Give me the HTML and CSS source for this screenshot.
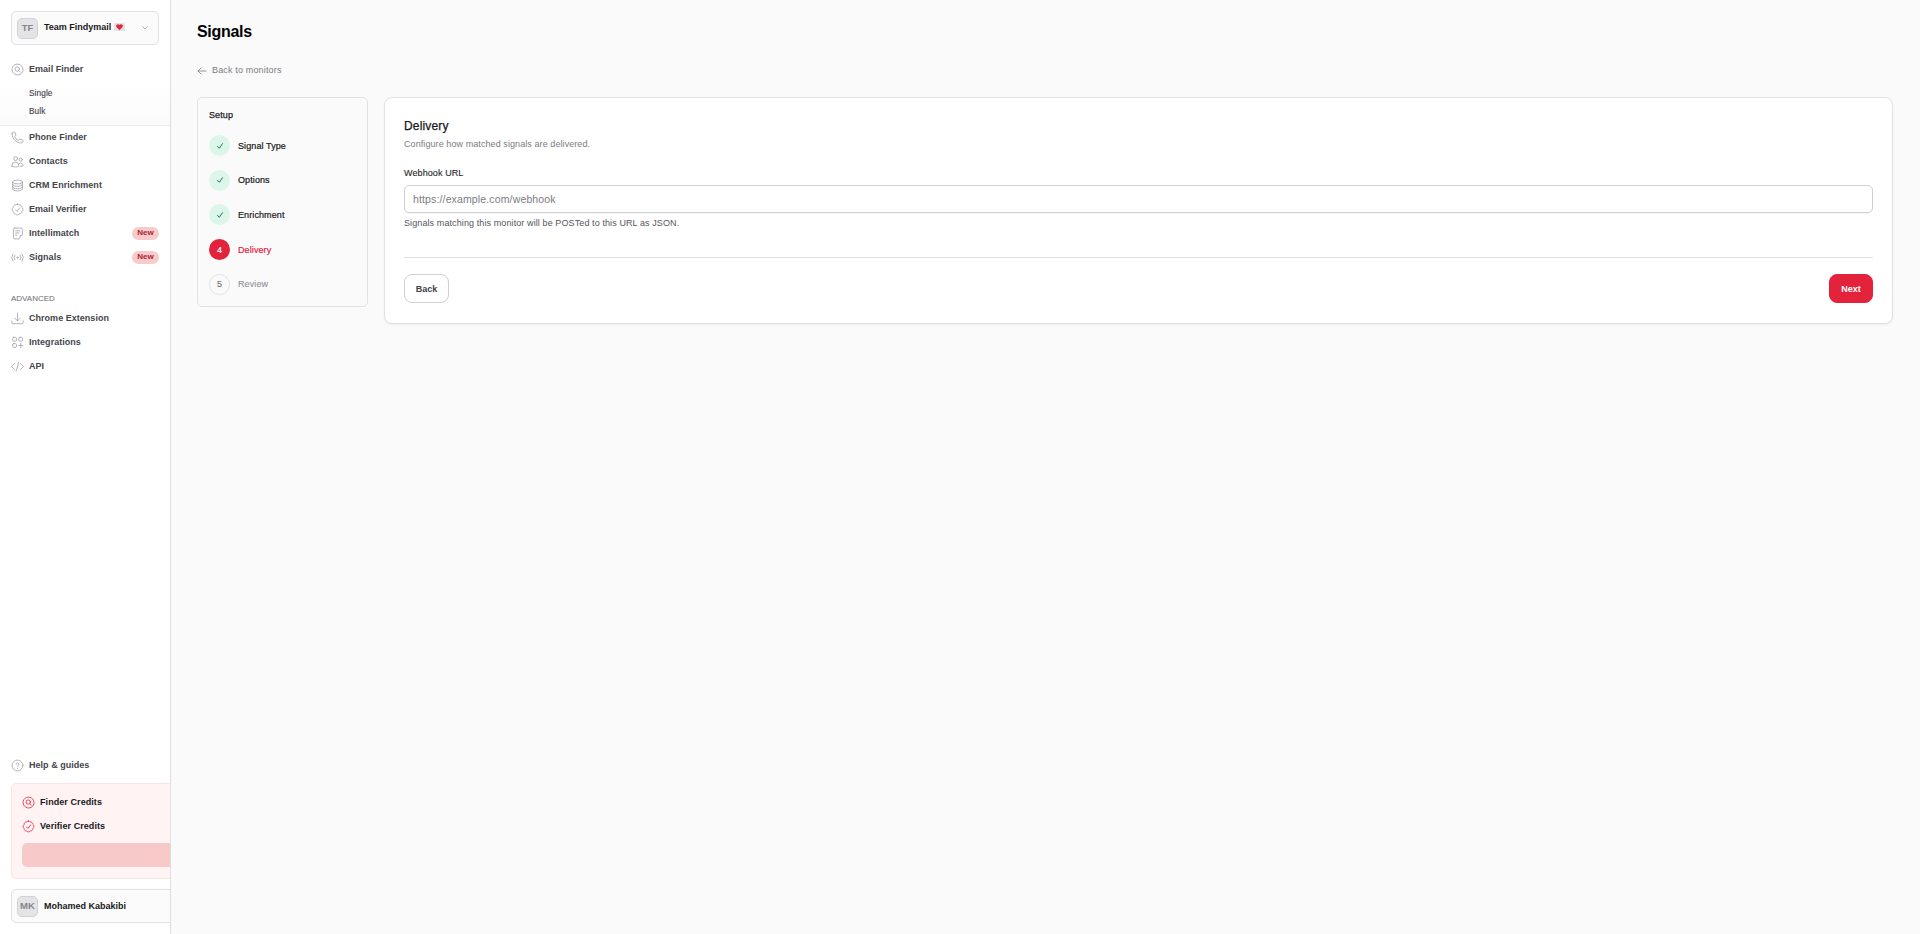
FILE: index.html
```html
<!DOCTYPE html>
<html lang="en">
<head>
  <meta charset="UTF-8">
  <title>Signals</title>
  <link rel="stylesheet" href="styles.css">
</head>
<body>
  <svg class="sprite" width="0" height="0">
    <symbol id="finder" viewBox="0 0 24 24"><path d="M9 2.500a10 10 0 0 1 6 0l3 1.500a10 10 0 0 1 3.200 4l.8 3v3l-1.200 3.500a10 10 0 0 1-4 3.500l-3.300 1h-3L7 20.500a10 10 0 0 1-4-4L2 13v-3l1.500-3.500a10 10 0 0 1 4-3.500z"/><circle cx="11.500" cy="11.200" r="4"/><path d="m14.500 14.200 3 3"/></symbol>
    <symbol id="phone" viewBox="0 0 24 24"><path d="M2 5a3 3 0 0 1 3-3h1.500c.6 0 1 .4 1.200.9l1.200 4.600c.1.500 0 .9-.4 1.200L6.500 10.500a14 14 0 0 0 7 7l1.800-2c.3-.4.7-.5 1.200-.4l4.600 1.200c.5.200.9.600.9 1.200V19a3 3 0 0 1-3 3C9.500 22 2 14.500 2 5z"/></symbol>
    <symbol id="contacts" viewBox="0 0 24 24"><circle cx="8.500" cy="6.500" r="3.700"/><circle cx="18" cy="8.500" r="2.900"/><path d="M1.500 20.500v-1a6.500 6.500 0 0 1 13 0v1c-4 2-9 2-13 0zM15 15.500a5 5 0 0 1 7.500 4.500c-1.500.8-3.500 1.200-5.500 1"/></symbol>
    <symbol id="database" viewBox="0 0 24 24"><ellipse cx="12" cy="5.500" rx="9" ry="3.500"/><path d="M3 5.500v13C3 20.400 7 22 12 22s9-1.600 9-3.500v-13M3 10c0 2 4 3.500 9 3.500s9-1.500 9-3.500M3 14.500C3 16.500 7 18 12 18s9-1.500 9-3.500"/></symbol>
    <symbol id="verifier" viewBox="0 0 24 24"><path d="M12 2c1.200 0 2.300.6 3 1.500a4 4 0 0 1 3.300 1A4 4 0 0 1 20 8a4 4 0 0 1 2 4c0 1.500-.8 2.700-2 3.500a4 4 0 0 1-1.300 3.500 4 4 0 0 1-3.700 1.300A4 4 0 0 1 12 22a4 4 0 0 1-3-1.700A4 4 0 0 1 5.300 19 4 4 0 0 1 4 15.500 4 4 0 0 1 2 12c0-1.500.8-3 2-4a4 4 0 0 1 1.500-3.500A4 4 0 0 1 9 3.500C9.700 2.600 10.800 2 12 2z"/><path d="m8.500 13 2.500 2.500 5-6.500"/></symbol>
    <symbol id="note" viewBox="0 0 24 24"><path d="M6 2h12.500A2.500 2.500 0 0 1 21 4.500v9a2.500 2.500 0 0 1-2.500 2.500h-2V19.500A2.500 2.500 0 0 1 14 22H7a2.500 2.500 0 0 1-2.500-2.500v-15A2.500 2.500 0 0 1 6 2zM8.500 7h8M8.500 11h6M8.500 15h2"/></symbol>
    <symbol id="signals" viewBox="0 0 24 24"><circle cx="12" cy="12" r="1.200"/><path d="M3.500 5.500a11 11 0 0 0 0 13M20.500 5.500a11 11 0 0 1 0 13M7 8a6.500 6.500 0 0 0 0 8M17 8a6.500 6.500 0 0 1 0 8"/></symbol>
    <symbol id="download" viewBox="0 0 24 24"><path d="M12 2v14M7 11.500l5 5 5-5M1.500 16.500v3a2 2 0 0 0 2 2h17a2 2 0 0 0 2-2v-3"/></symbol>
    <symbol id="integrations" viewBox="0 0 24 24"><rect x="3" y="2.500" width="7" height="7" rx="2"/><rect x="14.500" y="2.500" width="7" height="7" rx="2"/><rect x="3" y="14" width="7" height="7" rx="2"/><path d="M18 13.500v8M14 17.500h8"/></symbol>
    <symbol id="api" viewBox="0 0 24 24"><path d="m6.500 6.500-5.500 5.500 5.500 5.500M17.500 6.500l5.500 5.500-5.500 5.500M14.500 3.500l-5 17"/></symbol>
    <symbol id="help" viewBox="0 0 24 24"><circle cx="12" cy="12" r="10"/><path d="M9.500 9.500c0-3 5-3 5 0 0 2-2.500 2-2.500 4M12 17v.5"/></symbol>
    <symbol id="check" viewBox="0 0 24 24"><path d="m4.500 13 5.500 6L19.500 5"/></symbol>
  </svg>

  <aside class="sidebar">
    <div class="team">
      <span class="avatar">TF</span>
      <span class="team-name">Team Findymail</span>
      <svg class="letter" viewBox="0 0 11 8"><rect width="11" height="8" rx="1" fill="#e2e4e6"/><path d="M0 1l4 3-4 3M11 1 7 4l4 3" fill="none" stroke="#cfd2d4" stroke-width=".5"/><path d="M5.500 7.300 2.400 4C1.200 1.900 4.200.1 5.500 2.100 6.800.1 9.800 1.900 8.600 4z" fill="#e5263c"/></svg>
      <svg class="chevron" viewBox="0 0 8 8"><path d="m1.500 2.500 2.500 2.500 2.500-2.500"/></svg>
    </div>

    <nav class="menu">
      <a class="item"><svg class="icon"><use href="#finder"/></svg><span>Email Finder</span></a>
      <div class="submenu">
        <a>Single</a>
        <a>Bulk</a>
      </div>
      <a class="item"><svg class="icon"><use href="#phone"/></svg><span>Phone Finder</span></a>
      <a class="item"><svg class="icon"><use href="#contacts"/></svg><span>Contacts</span></a>
      <a class="item"><svg class="icon"><use href="#database"/></svg><span>CRM Enrichment</span></a>
      <a class="item"><svg class="icon"><use href="#verifier"/></svg><span>Email Verifier</span></a>
      <a class="item"><svg class="icon"><use href="#note"/></svg><span>Intellimatch</span><b class="badge">New</b></a>
      <a class="item"><svg class="icon"><use href="#signals"/></svg><span>Signals</span><b class="badge">New</b></a>
      <div class="heading">ADVANCED</div>
      <a class="item"><svg class="icon"><use href="#download"/></svg><span>Chrome Extension</span></a>
      <a class="item"><svg class="icon"><use href="#integrations"/></svg><span>Integrations</span></a>
      <a class="item"><svg class="icon"><use href="#api"/></svg><span>API</span></a>
    </nav>

    <div class="bottom">
      <a class="item"><svg class="icon"><use href="#help"/></svg><span>Help &amp; guides</span></a>
      <div class="credits">
        <div class="credit"><svg class="icon"><use href="#finder"/></svg><span>Finder Credits</span></div>
        <div class="credit"><svg class="icon"><use href="#verifier"/></svg><span>Verifier Credits</span></div>
        <div class="credit-button"></div>
      </div>
      <div class="user">
        <span class="avatar">MK</span>
        <span class="user-name">Mohamed Kabakibi</span>
      </div>
    </div>
  </aside>

  <main class="main">
    <h1>Signals</h1>
    <a class="back-link"><svg viewBox="0 0 10 8"><path d="M9 4H1M4 1 1 4l3 3"/></svg><span>Back to monitors</span></a>

    <div class="columns">
      <section class="setup">
        <h2>Setup</h2>
        <ol class="steps">
          <li class="done"><i><svg><use href="#check"/></svg></i><span>Signal Type</span></li>
          <li class="done"><i><svg><use href="#check"/></svg></i><span>Options</span></li>
          <li class="done"><i><svg><use href="#check"/></svg></i><span>Enrichment</span></li>
          <li class="active"><i>4</i><span>Delivery</span></li>
          <li class="todo"><i>5</i><span>Review</span></li>
        </ol>
      </section>

      <section class="card">
        <h2>Delivery</h2>
        <p class="subtitle">Configure how matched signals are delivered.</p>
        <label for="webhook">Webhook URL</label>
        <input id="webhook" type="text" placeholder="https://example.com/webhook">
        <p class="hint">Signals matching this monitor will be POSTed to this URL as JSON.</p>
        <div class="actions">
          <button class="btn">Back</button>
          <button class="btn primary">Next</button>
        </div>
      </section>
    </div>
  </main>
</body>
</html>
```
FILE: styles.css
```css
* {
  box-sizing: border-box;
}

body {
  margin: 0;
  height: 100vh;
  display: flex;
  background: #fafafa;
  font-family: "Liberation Sans", Arial, sans-serif;
  font-size: 9px;
  line-height: 12px;
  color: #18181b;
  overflow: hidden;
}

h1, h2, p, ol {
  margin: 0;
  padding: 0;
}

svg {
  fill: none;
  stroke: currentColor;
  stroke-linecap: round;
  stroke-linejoin: round;
  flex: none;
}

.sprite {
  display: none;
}

/* sidebar */
.sidebar {
  width: 171px;
  flex: none;
  display: flex;
  flex-direction: column;
  padding: 11px 0 11px;
  background: #fff;
  border-right: 1px solid #dedee0;
  overflow: hidden;
}

.team, .user {
  height: 34px;
  margin-left: 11px;
  display: flex;
  align-items: center;
  padding: 0 5px;
  background: #fbfbfb;
  border: 1px solid #e1e1e3;
  border-radius: 5px;
  font-weight: bold;
}

.team {
  width: 148px;
}

.user {
  width: 190px;
}

.avatar {
  width: 21px;
  height: 21px;
  margin-right: 6px;
  display: flex;
  align-items: center;
  justify-content: center;
  background: #e4e4e6;
  border: 1px solid #d2d2d5;
  border-radius: 5px;
  color: #85858a;
  font-size: 9.5px;
}

.team-name {
  padding-bottom: 2px;
}

.user-name {
  padding-bottom: 1px;
}

.letter {
  width: 11px;
  height: 8px;
  margin-left: 3px;
  margin-bottom: 2px;
  stroke: none;
}

.chevron {
  width: 8px;
  height: 8px;
  margin-left: auto;
  margin-right: 4px;
  color: #b5b5ba;
}

.menu {
  padding-top: 12px;
}

.item {
  height: 24px;
  display: flex;
  align-items: center;
  padding: 0 11px;
  color: #45454c;
  font-weight: bold;
  letter-spacing: .03px;
}

.icon {
  width: 13px;
  height: 13px;
  margin: 1px 5px 0 0;
  color: #a1a1a8;
  stroke-width: 1.5;
}

.submenu {
  height: 45px;
  margin-bottom: -1px;
  padding: 4px 0 0 29px;
  background: linear-gradient(#fff, #fbfbfb);
  border-bottom: 1px solid #eeeeef;
  font-size: 8.25px;
  letter-spacing: .1px;
  -webkit-text-stroke: .12px;
}

.submenu a {
  display: block;
  line-height: 18px;
  color: #3f3f46;
}

.badge {
  width: 27px;
  height: 13px;
  margin-left: auto;
  background: #f8caca;
  border-radius: 7px;
  color: #a92532;
  font-size: 8px;
  line-height: 12px;
  text-align: center;
}

.heading {
  margin-top: 23px;
  padding: 0 11px;
  line-height: 14px;
  color: #6c6c73;
  font-size: 8px;
}

.bottom {
  margin-top: auto;
}

.credits {
  width: 190px;
  height: 96px;
  margin: 6px 0 10px 11px;
  padding: 6px 10px;
  background: #fff3f4;
  border: 1px solid #fae3e5;
  border-radius: 5px;
}

.credit {
  height: 24px;
  display: flex;
  align-items: center;
  font-weight: bold;
  letter-spacing: .07px;
}

.credit .icon {
  color: #e3223b;
}

.credit-button {
  height: 24px;
  margin-top: 5px;
  background: #f7c9c9;
  border-radius: 5px;
}

/* page */
.main {
  flex: 1;
  padding: 21px 27px 0 26px;
}

h1 {
  font-size: 16px;
  line-height: 22px;
  letter-spacing: -.3px;
  color: #000;
}

.back-link {
  display: flex;
  align-items: center;
  margin-top: 21px;
  color: #7b7b82;
  letter-spacing: .16px;
}

.back-link svg {
  width: 10px;
  height: 8px;
  margin: 1px 5px 0 0;
  stroke-width: .8;
}

.columns {
  display: flex;
  align-items: flex-start;
  gap: 16px;
  margin-top: 21px;
}

.setup {
  width: 171px;
  height: 210px;
  padding: 10px 11px;
  border: 1px solid #e2e2e4;
  border-radius: 5px;
}

.setup h2 {
  font-size: 9px;
  line-height: 14px;
  font-weight: normal;
  letter-spacing: .1px;
  -webkit-text-stroke: .25px;
}

.steps {
  display: flex;
  flex-direction: column;
  gap: 13.7px;
  margin-top: 13px;
  list-style: none;
}

.steps li {
  display: flex;
  align-items: center;
  gap: 8px;
  height: 21px;
  letter-spacing: .1px;
  -webkit-text-stroke: .2px;
}

.steps li.todo {
  -webkit-text-stroke: .1px;
}

.steps i {
  width: 21px;
  height: 21px;
  display: flex;
  align-items: center;
  justify-content: center;
  border-radius: 50%;
  font-style: normal;
}

.steps svg {
  width: 8px;
  height: 8px;
  stroke-width: 3;
}

.done i {
  background: #dcf7ea;
  color: #23795a;
}

.active {
  color: #e3223b;
}

.active i {
  background: #e3223b;
  color: #fff;
}

.todo {
  color: #8f8f95;
}

.todo i {
  border: 1px solid #e2e2e4;
  color: #6f6f76;
}

.card {
  flex: 1;
  height: 227px;
  padding: 19px;
  background: #fff;
  border: 1px solid #e2e2e4;
  border-radius: 8px;
  box-shadow: 0 1px 2px rgba(0, 0, 0, .06);
}

.card h2 {
  font-size: 12px;
  line-height: 18px;
  font-weight: normal;
  letter-spacing: .15px;
  -webkit-text-stroke: .25px;
}

.subtitle {
  margin-top: 3px;
  color: #7b7b82;
  letter-spacing: .08px;
}

label {
  display: block;
  margin-top: 17px;
  color: #27272a;
  letter-spacing: .1px;
  -webkit-text-stroke: .12px;
}

input {
  display: block;
  width: 100%;
  height: 28px;
  margin-top: 6px;
  padding: 0 8px 1px;
  background: #fff;
  border: 1px solid #d0d0d3;
  border-radius: 5px;
  font: 10.5px "Liberation Sans", Arial, sans-serif;
  letter-spacing: .14px;
  box-shadow: 0 1px 1px rgba(0, 0, 0, .04);
}

input::placeholder {
  color: #7b7b80;
}

.hint {
  margin-top: 4px;
  color: #55555c;
  letter-spacing: .1px;
}

.actions {
  display: flex;
  justify-content: space-between;
  margin-top: 28px;
  padding-top: 16px;
  border-top: 1px solid #e0e0e2;
}

.btn {
  width: 45px;
  height: 29px;
  padding: 0;
  background: #fff;
  border: 1px solid #d0d0d3;
  border-radius: 8px;
  color: #3f3f46;
  font: bold 9px "Liberation Sans", Arial, sans-serif;
}

.primary {
  width: 44px;
  background: #e3223b;
  border-color: #e3223b;
  color: #fff;
}
```
